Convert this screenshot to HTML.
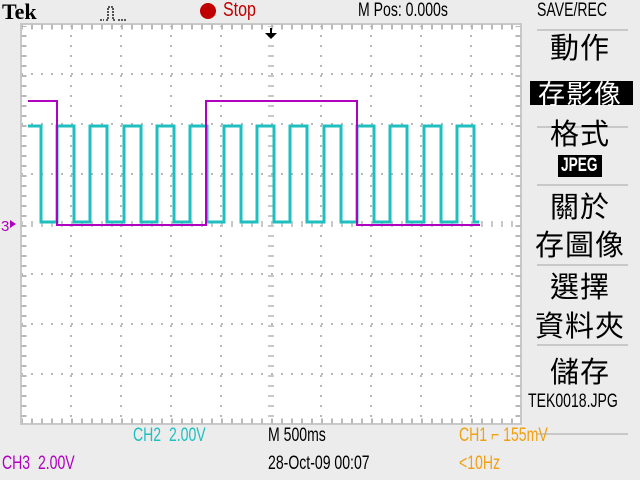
<!DOCTYPE html>
<html><head><meta charset="utf-8"><style>
html,body{margin:0;padding:0;}
body{width:640px;height:480px;background:#ececec;position:relative;overflow:hidden;font-family:"Liberation Sans","Noto Sans CJK TC",sans-serif;}
.t{position:absolute;white-space:nowrap;transform-origin:0 0;}
.cjk{position:absolute;font-family:"Noto Sans CJK TC","WenQuanYi Zen Hei",sans-serif;font-size:29px;line-height:30px;color:#000;text-align:center;width:100px;left:530px;letter-spacing:1px;}
.sep{position:absolute;left:537px;width:91px;height:2px;background:#c8c8c8;}
</style></head><body>
<div class="t" style="left:2px;top:-1px;font-family:'Liberation Serif',serif;font-weight:bold;font-size:22px;">Tek</div>
<svg style="position:absolute;left:98px;top:4px" width="30" height="18"><path d="M2,16H6M8,16H10V3H15V16H18M20,16H28" stroke="#000" stroke-width="1.3" fill="none" stroke-dasharray="2,1"/></svg>
<div style="position:absolute;left:200px;top:3px;width:16px;height:16px;border-radius:50%;background:#c00000"></div>
<div class="t" style="left:223px;top:-1px;font-size:20px;color:#c00000;transform:scaleX(0.8)">Stop</div>
<div class="t" style="left:358px;top:0px;font-size:19px;transform:scaleX(0.74)">M Pos: 0.000s</div>
<div class="t" style="left:537px;top:0px;font-size:19px;transform:scaleX(0.74)">SAVE/REC</div>

<svg style="position:absolute;left:0;top:0" width="640" height="480">
<rect x="21" y="24" width="500" height="400" fill="#fff" stroke="#c8c8c8" stroke-width="2"/>
<g stroke="#b8b8b8" stroke-width="2" fill="none">
<path d="M71,26V424M121,26V424M171,26V424M221,26V424M321,26V424M371,26V424M421,26V424M471,26V424" stroke-dasharray="2,8" stroke-dashoffset="-9"/>
<path d="M22,74H521M22,124H521M22,174H521M22,274H521M22,324H521M22,374H521" stroke-dasharray="2,8" stroke-dashoffset="-9"/>
<path d="M271,26V424" stroke-dasharray="2,8" stroke-dashoffset="-9" stroke-width="6" stroke="#c8c8c8"/>
<path d="M22,224H521" stroke-dasharray="2,8" stroke-dashoffset="-9" stroke-width="6" stroke="#c8c8c8"/>
<path d="M22,27H521M22,421H521" stroke-dasharray="2,8" stroke-dashoffset="-9" stroke-width="5"/>
<path d="M24,26V424M518,26V424" stroke-dasharray="2,8" stroke-dashoffset="-9" stroke-width="5"/>
</g>
<rect x="270" y="28" width="2" height="6" fill="#000"/>
<path d="M265,33H277L271,39Z" fill="#000"/>
<path d="M28,126H41V222H57V126H74V222H90V126H107V222H124V126H141V222H157V126H174V222H190V126H207V222H224V126H241V222H257V126H274V222H290V126H307V222H324V126H341V222H357V126H374V222H390V126H407V222H424V126H441V222H457V126H474V222H479" stroke="#1fbfbf" stroke-width="3" fill="none"/>
<path d="M28,101H57V225H206V101H357V225H480" stroke="#b000c0" stroke-width="2" fill="none"/>
<text x="1" y="231" font-size="15" fill="#b000c0" font-family="Liberation Sans">3</text>
<path d="M10,220L16,224L10,228Z" fill="#b000c0"/>
</svg>

<div class="sep" style="top:29px"></div>
<div class="cjk" style="top:31px">動作</div>
<div style="position:absolute;left:530px;top:81px;width:103px;height:24px;background:#000;"></div>
<div class="cjk" style="top:78px;color:#fff;font-size:27px">存影像</div>
<div class="sep" style="top:126px"></div>
<div class="cjk" style="top:117px">格式</div>
<div style="position:absolute;left:558px;top:155px;width:44px;height:22px;background:#000;"></div>
<div class="t" style="left:561px;top:155px;font-size:19px;color:#fff;font-weight:bold;transform:scaleX(0.72)">JPEG</div>
<div class="sep" style="top:184px"></div>
<div class="cjk" style="top:190px">關於</div>
<div class="cjk" style="top:228px">存圖像</div>
<div class="sep" style="top:264px"></div>
<div class="cjk" style="top:270px">選擇</div>
<div class="cjk" style="top:309px">資料夾</div>
<div class="sep" style="top:344px"></div>
<div class="cjk" style="top:355px">儲存</div>
<div class="t" style="left:528px;top:391px;font-size:19px;transform:scaleX(0.74)">TEK0018.JPG</div>
<div class="sep" style="top:433px"></div>

<div class="t" style="left:133px;top:425px;font-size:19px;color:#1fbfbf;transform:scaleX(0.74)">CH2&nbsp; 2.00V</div>
<div class="t" style="left:268px;top:425px;font-size:19px;transform:scaleX(0.74)">M 500ms</div>
<div class="t" style="left:459px;top:425px;font-size:19px;color:#f0a010;transform:scaleX(0.74)">CH1 ⌐ 155mV</div>
<div class="t" style="left:2px;top:453px;font-size:19px;color:#b000c0;transform:scaleX(0.74)">CH3&nbsp; 2.00V</div>
<div class="t" style="left:268px;top:453px;font-size:19px;transform:scaleX(0.74)">28-Oct-09 00:07</div>
<div class="t" style="left:459px;top:453px;font-size:19px;color:#f0a010;transform:scaleX(0.74)">&lt;10Hz</div>
</body></html>
